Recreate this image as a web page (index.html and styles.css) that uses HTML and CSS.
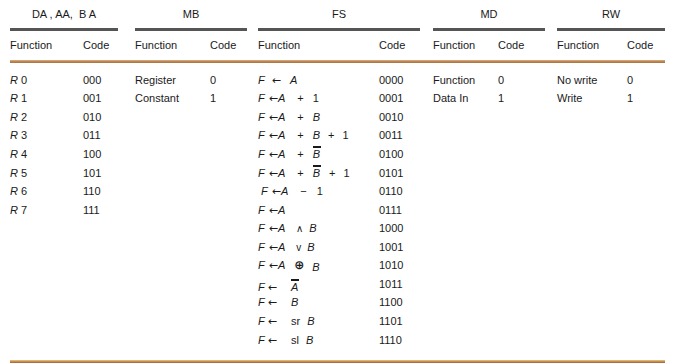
FILE: index.html
```html
<!DOCTYPE html>
<html>
<head>
<meta charset="utf-8">
<link rel="stylesheet" href="styles.css">
</head>
<body>
<div class="table">
  <div class="head">
    <div class="group g1">
      <div class="title">DA , AA,&nbsp; B A</div>
      <div class="rule"></div>
      <div class="cols"><span>Function</span><span>Code</span></div>
    </div>
    <div class="group g2">
      <div class="title">MB</div>
      <div class="rule"></div>
      <div class="cols"><span>Function</span><span>Code</span></div>
    </div>
    <div class="group g3">
      <div class="title">FS</div>
      <div class="rule"></div>
      <div class="cols"><span>Function</span><span>Code</span></div>
    </div>
    <div class="group g4">
      <div class="title">MD</div>
      <div class="rule"></div>
      <div class="cols"><span>Function</span><span>Code</span></div>
    </div>
    <div class="group g5">
      <div class="title">RW</div>
      <div class="rule"></div>
      <div class="cols"><span>Function</span><span>Code</span></div>
    </div>
  </div>
  <div class="brown"></div>
  <div class="body">
    <div class="group g1 rows">
      <span><i>R</i> 0</span><span>000</span>
      <span><i>R</i> 1</span><span>001</span>
      <span><i>R</i> 2</span><span>010</span>
      <span><i>R</i> 3</span><span>011</span>
      <span><i>R</i> 4</span><span>100</span>
      <span><i>R</i> 5</span><span>101</span>
      <span><i>R</i> 6</span><span>110</span>
      <span><i>R</i> 7</span><span>111</span>
    </div>
    <div class="group g2 rows">
      <span>Register</span><span>0</span>
      <span>Constant</span><span>1</span>
    </div>
    <div class="group g3 rows">
      <span><i>F</i><span class="ar a0">←</span><i class="u0">A</i></span><span>0000</span>
      <span><i>F</i><span class="ar">←</span><i>A</i><span class="op">+</span>1</span><span>0001</span>
      <span><i>F</i><span class="ar">←</span><i>A</i><span class="op">+</span><i>B</i></span><span>0010</span>
      <span><i>F</i><span class="ar">←</span><i>A</i><span class="op">+</span><i>B</i><span class="op2">+</span>1</span><span>0011</span>
      <span><i>F</i><span class="ar">←</span><i>A</i><span class="op">+</span><i class="bar">B</i></span><span>0100</span>
      <span><i>F</i><span class="ar">←</span><i>A</i><span class="op">+</span><i class="bar">B</i><span class="op2">+</span>1</span><span>0101</span>
      <span class="ind"><i>F</i><span class="ar">←</span><i>A</i><span class="op mop">−</span>1</span><span>0110</span>
      <span><i>F</i><span class="ar">←</span><i>A</i></span><span>0111</span>
      <span><i>F</i><span class="ar">←</span><i>A</i><span class="lop">∧</span><i>B</i></span><span>1000</span>
      <span><i>F</i><span class="ar">←</span><i>A</i><span class="lop">v</span><i>B</i></span><span>1001</span>
      <span><i>F</i><span class="ar">←</span><i>A</i><span class="xop">⊕</span><i class="low">B</i></span><span>1010</span>
      <span class="shift"><i>F</i><span class="ar a1">←</span><i class="bar u1">A</i></span><span>1011</span>
      <span><i>F</i><span class="ar a1">←</span><i class="u1">B</i></span><span>1100</span>
      <span><i>F</i><span class="ar a1">←</span><span class="u1">sr</span><i class="u2">B</i></span><span>1101</span>
      <span><i>F</i><span class="ar a1">←</span><span class="u1">sl</span><i class="u2">B</i></span><span>1110</span>
    </div>
    <div class="group g4 rows">
      <span>Function</span><span>0</span>
      <span>Data In</span><span>1</span>
    </div>
    <div class="group g5 rows">
      <span>No write</span><span>0</span>
      <span>Write</span><span>1</span>
    </div>
  </div>
  <div class="bottom"></div>
</div>
</body>
</html>
```
FILE: styles.css
```css
html, body {
  margin: 0;
  padding: 0;
  background: #ffffff;
}
body {
  font-family: "Liberation Sans", Arial, sans-serif;
  font-size: 11px;
  color: #1a1a1a;
}
.table {
  width: 655px;
  padding: 7px 0 0 10px;
}
.head, .body {
  display: flex;
  align-items: flex-start;
}
.g1 { width: 108px; margin-right: 17px; }
.g2 { width: 112px; margin-right: 11px; }
.g3 { width: 162px; margin-right: 13px; }
.g4 { width: 112px; margin-right: 12px; }
.g5 { width: 108px; }
.g1 .cols, .g1.rows { grid-template-columns: 73px 1fr; }
.g2 .cols, .g2.rows { grid-template-columns: 75px 1fr; }
.g3 .cols, .g3.rows { grid-template-columns: 121px 1fr; }
.g4 .cols, .g4.rows { grid-template-columns: 65px 1fr; }
.g5 .cols, .g5.rows { grid-template-columns: 70px 1fr; }
.title {
  text-align: center;
  line-height: 14px;
  height: 14px;
}
.rule {
  height: 3px;
  margin-top: 7px;
  background: #555555;
}
.cols {
  display: grid;
  line-height: 14px;
  margin-top: 7px;
}
.brown {
  height: 3px;
  margin-top: 8px;
  background: linear-gradient(#d9b27a, #b8804e 60%, #a87048);
}
.body {
  padding-top: 7.7px;
}
.rows {
  display: grid;
  grid-auto-rows: 18.57px;
  line-height: 18.57px;
}
.rows > span {
  white-space: nowrap;
}
i {
  font-style: italic;
}
.ar {
  font-family: "DejaVu Sans", sans-serif;
  font-size: 11px;
  margin-left: 4px;
}
.a0 { margin-left: 7px; }
.a1 { margin-left: 3px; }
.u0 { margin-left: 9px; }
.u1 { margin-left: 14px; }
.u2 { margin-left: 7px; }
.op {
  margin: 0 9px 0 12px;
}
.mop {
  margin-right: 10px;
}
.op2 {
  margin: 0 8px 0 8px;
}
.lop {
  margin: 0 6px 0 11px;
  font-size: 10px;
}
.xop {
  font-family: "DejaVu Sans", sans-serif;
  font-weight: bold;
  font-size: 12px;
  line-height: 10px;
  margin: 0 8px 0 9px;
}
.ind {
  padding-left: 3px;
}
.bar {
  display: inline-block;
  line-height: 11px;
  border-top: 2px solid #1a1a1a;
  padding: 1px 1px 0 0;
  margin-top: -3px;
}
.low {
  position: relative;
  top: 2px;
}
.shift {
  position: relative;
  top: 3px;
}
.bottom {
  height: 3px;
  margin-top: 10.7px;
  background: linear-gradient(#e6c66a, #d8a860 35%, #b07450 65%, #a86a4a);
}
```
